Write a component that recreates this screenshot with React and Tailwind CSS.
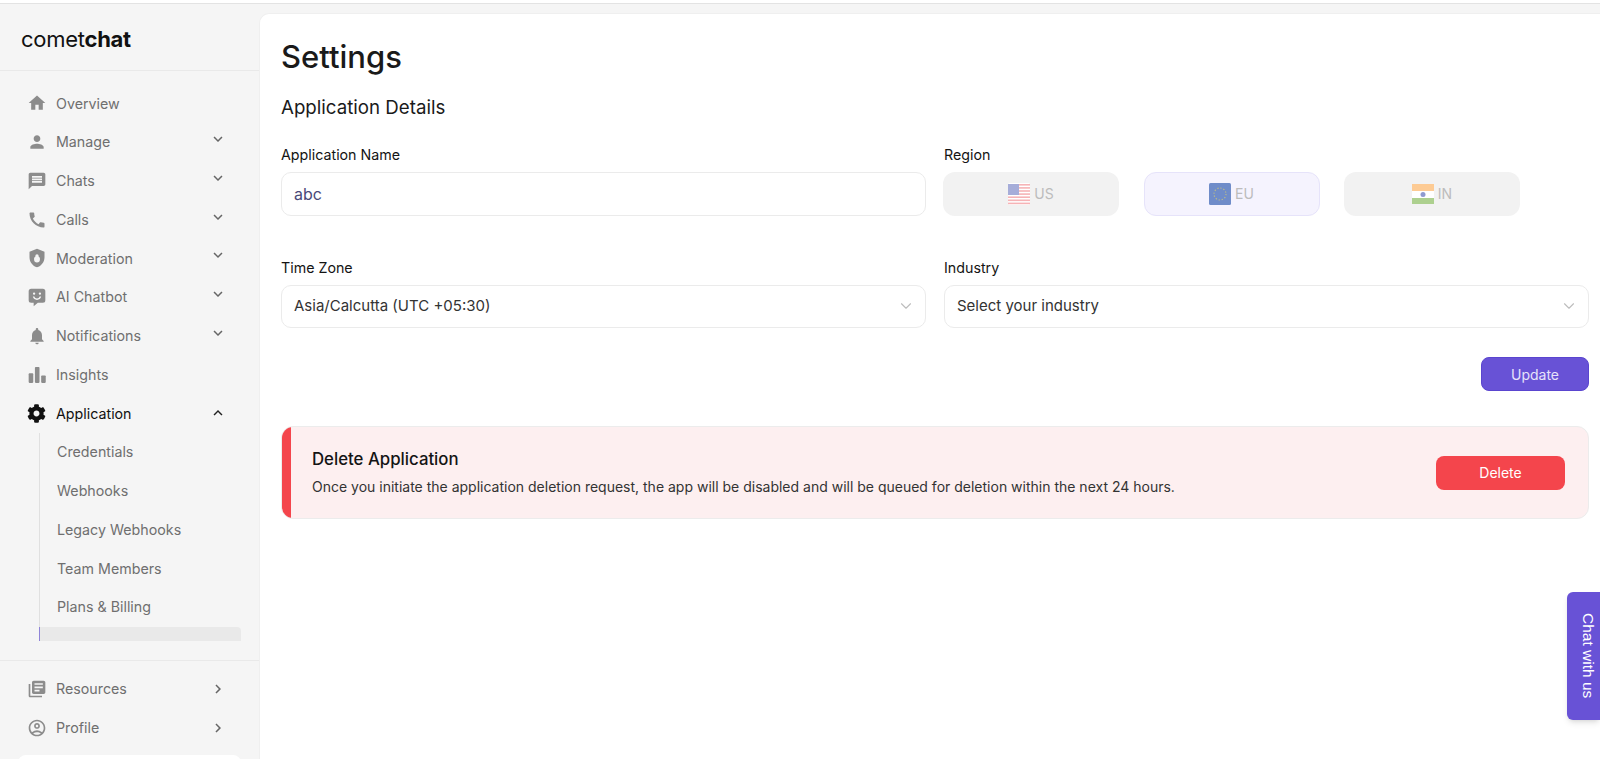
import { FaCog } from "react-icons/fa";
import {
	MdHome,
	MdPerson,
	MdMessage,
	MdCall,
	MdNotifications,
	MdLibraryBooks,
	MdOutlineAccountCircle,
	MdKeyboardArrowDown,
	MdKeyboardArrowUp,
	MdKeyboardArrowRight,
} from "react-icons/md";
import { ChevronDown } from "lucide-react";

const ShieldIcon = ({ className }) => (
	<svg viewBox="0 0 24 24" className={className} fill="currentColor">
		<path
			fillRule="evenodd"
			d="M12 1 3 4.500v6.500c0 5.600 3.800 10.700 9 12 5.200-1.300 9-6.400 9-12V4.500L12 1ZM12 7.500a2 2 0 0 1 2 2v1c.9.500 1.500 1.300 1.500 2.300v1a3.500 3.500 0 0 1-7 0v-1c0-1 .6-1.800 1.500-2.300v-1a2 2 0 0 1 2-2Z"
		/>
	</svg>
);

const BotIcon = ({ className }) => (
	<svg viewBox="0 0 24 24" className={className} fill="currentColor">
		<path
			fillRule="evenodd"
			d="M5 2h14A3 3 0 0 1 22 5v11a3 3 0 0 1-3 3h-6l-5 4v-4H5a3 3 0 0 1-3-3V5a3 3 0 0 1 3-3ZM8.500 6.500a1.400 1.400 0 1 0 0 2.800 1.400 1.400 0 0 0 0-2.800Zm7 0a1.400 1.400 0 1 0 0 2.800 1.400 1.400 0 0 0 0-2.800ZM7 11.500c.6 2.500 2.500 4 5 4s4.400-1.500 5-4h-1.800c-.5 1.500-1.700 2.300-3.200 2.300s-2.700-.8-3.200-2.300H7Z"
		/>
	</svg>
);

const BarsIcon = ({ className }) => (
	<svg viewBox="0 0 24 24" className={className} fill="currentColor">
		<rect x="2" y="10" width="5.500" height="11.500" rx="1" />
		<rect x="9.500" y="2.500" width="5.500" height="19" rx="1" />
		<rect x="17" y="12.500" width="5.500" height="9" rx="1" />
	</svg>
);

const UsFlag = () => (
	<svg viewBox="0 0 22 22" className="w-[22px] h-[22px]">
		<rect width="22" height="22" rx="1.500" fill="#fff" />
		{[0, 1, 2, 3, 4, 5, 6].map((i) => (
			<rect key={i} y={1 + i * 3.1} width="22" height="1.600" fill="#f6b3b6" />
		))}
		<rect y="1" width="11" height="11" fill="#a6add9" />
	</svg>
);

const EuFlag = () => (
	<svg viewBox="0 0 22 22" className="w-[22px] h-[22px]">
		<rect width="22" height="22" rx="1.500" fill="#6f8cc9" />
		<circle cx="11" cy="11" r="6" fill="none" stroke="#b7b98a" strokeWidth="1.200" strokeDasharray="1.300 1.800" />
	</svg>
);

const InFlag = () => (
	<svg viewBox="0 0 22 22" className="w-[22px] h-[22px]">
		<rect y="1" width="22" height="7" fill="#fdcb94" />
		<rect y="8" width="22" height="7" fill="#ffffff" />
		<rect y="15" width="22" height="6" fill="#add08f" />
		<circle cx="11" cy="11.500" r="2.500" fill="#8f9ad0" />
	</svg>
);

const navTop = [
	{ label: "Overview", icon: MdHome },
	{ label: "Manage", icon: MdPerson, arrow: "down" },
	{ label: "Chats", icon: MdMessage, arrow: "down" },
	{ label: "Calls", icon: MdCall, arrow: "down" },
	{ label: "Moderation", icon: ShieldIcon, arrow: "down" },
	{ label: "AI Chatbot", icon: BotIcon, arrow: "down" },
	{ label: "Notifications", icon: MdNotifications, arrow: "down" },
	{ label: "Insights", icon: BarsIcon },
];

const subNav = ["Credentials", "Webhooks", "Legacy Webhooks", "Team Members", "Plans & Billing"];

const navBottom = [
	{ label: "Resources", icon: MdLibraryBooks },
	{ label: "Profile", icon: MdOutlineAccountCircle },
];

function NavRow({ label, icon: Icon, arrow }) {
	return (
		<div className="flex items-center h-[38.750px] pl-[27px] pr-[32px] text-[#6f6f6f]">
			<span className="w-[29px] shrink-0">
				<Icon className="w-[20px] h-[20px] text-[#8c8c8c]" />
			</span>
			<span className="flex-1 text-[14.250px]">{label}</span>
			{arrow === "down" && <MdKeyboardArrowDown className="w-[18px] h-[18px] text-[#666] -mt-[6px]" />}
			{arrow === "right" && <MdKeyboardArrowRight className="w-[18px] h-[18px] text-[#666]" />}
		</div>
	);
}

function Field({ label, children }) {
	return (
		<div>
			<div className="text-[14.250px] leading-[17px] text-[#141414] mb-[9px]">{label}</div>
			{children}
		</div>
	);
}

function SelectBox({ value }) {
	return (
		<div className="flex items-center justify-between h-[43.500px] pl-[12px] pr-[10px] rounded-[10px] border border-[#ebebeb] text-[15px] text-[#333]">
			<span>{value}</span>
			<ChevronDown className="w-[18px] h-[18px] text-[#bdbdbd]" strokeWidth={1.500} />
		</div>
	);
}

function RegionButton({ name, flag, active }) {
	return (
		<div
			className={
				active
					? "flex items-center justify-center gap-[4px] w-[176px] h-[43.500px] rounded-[12px] border border-[#e6e3fa] bg-[#f5f3fe] text-[14px] text-[#bcbcbc]"
					: "flex items-center justify-center gap-[4px] w-[176px] h-[43.500px] rounded-[12px] bg-[#f2f2f2] text-[14px] text-[#bcbcbc]"
			}
		>
			{flag}
			<span>{name}</span>
		</div>
	);
}

export default function App() {
	return (
		<div className="relative h-[759px] overflow-hidden flex flex-col bg-[#f5f5f5] font-['Inter','Liberation_Sans',sans-serif]">
			<div className="h-[4px] shrink-0 bg-white border-b border-[#e3e3e3]" />

			<div className="flex flex-1 min-h-0">
				{/* sidebar */}
				<aside className="w-[259px] shrink-0 flex flex-col">
					<div className="h-[67px] shrink-0 border-b border-[#e9e9e9] pl-[21px] pt-[19px] text-[22px] leading-[32px] text-[#111] tracking-[-0.3px]">
						comet<span className="font-bold">chat</span>
					</div>

					<nav className="pt-[13px]">
						{navTop.map((item) => (
							<NavRow key={item.label} {...item} />
						))}

						<div className="flex items-center h-[38.750px] pl-[27px] pr-[32px] text-[#111]">
							<span className="w-[29px] shrink-0">
								<FaCog className="w-[19px] h-[19px]" />
							</span>
							<span className="flex-1 text-[14.250px]">Application</span>
							<MdKeyboardArrowUp className="w-[18px] h-[18px] text-[#222]" />
						</div>

						<div className="ml-[39px] mr-[18px] border-l border-[#e0e0e0]">
							{subNav.map((label) => (
								<div key={label} className="flex items-center h-[38.750px] pl-[17px] text-[14.250px] text-[#6f6f6f]">
									{label}
								</div>
							))}
							<div className="h-[14px] bg-[#e9e9e9] rounded-tr-[4px] border-l border-[#8f84d8] -ml-px" />
						</div>
					</nav>

					<div className="mt-[19px] border-t border-[#e9e9e9] pt-[9px]">
						{navBottom.map((item) => (
							<NavRow key={item.label} {...item} arrow="right" />
						))}
					</div>

					<div className="mt-[8px] mx-[18px] h-[20px] bg-white rounded-t-[8px] shrink-0" />
				</aside>

				{/* main panel */}
				<main className="flex-1 min-w-0 mt-[9px] bg-white rounded-tl-[10px] border-l border-t border-[#efefef] pl-[21px] pr-[11px] pt-[24px]">
					<h1 className="text-[31px] leading-[38px] font-medium text-[#1a1a1a]">Settings</h1>
					<h2 className="mt-[20px] text-[18.700px] leading-[24px] text-[#1a1a1a]">Application Details</h2>

					<div className="mt-[26px] grid grid-cols-2 gap-x-[18px] gap-y-[43px]">
						<Field label="Application Name">
							<div className="flex items-center h-[43.500px] pl-[12px] rounded-[10px] border border-[#ebebeb] text-[16px] text-[#4a4a78]">
								abc
							</div>
						</Field>
						<Field label="Region">
							<div className="flex gap-[24.500px] -ml-px">
								<RegionButton name="US" flag={<UsFlag />} />
								<RegionButton name="EU" flag={<EuFlag />} active />
								<RegionButton name="IN" flag={<InFlag />} />
							</div>
						</Field>
						<Field label="Time Zone">
							<SelectBox value="Asia/Calcutta (UTC +05:30)" />
						</Field>
						<Field label="Industry">
							<SelectBox value="Select your industry" />
						</Field>
					</div>

					<div className="flex justify-end mt-[29px]">
						<button className="w-[108px] h-[34px] rounded-[8px] bg-[#6852d6] border border-[#5a45cf] text-[14px] text-[#e6e2fa]">
							Update
						</button>
					</div>

					<div className="mt-[35px] flex items-center h-[93px] rounded-[12px] border border-[#ececec] bg-[#fdeff0] overflow-hidden">
						<div className="w-[9px] h-full shrink-0 bg-[#f4454c]" />
						<div className="flex-1 pl-[21px]">
							<div className="text-[16.800px] leading-[20px] font-medium text-[#141414]">Delete Application</div>
							<p className="mt-[9px] text-[14px] leading-[18px] text-[#333]">
								Once you initiate the application deletion request, the app will be disabled and will be queued for deletion within the next 24 hours.
							</p>
						</div>
						<button className="w-[129px] h-[34px] mr-[23px] rounded-[8px] bg-[#f4454c] text-[14px] text-white">
							Delete
						</button>
					</div>
				</main>
			</div>

			{/* chat tab */}
			<div className="absolute right-0 top-[592px] w-[33px] h-[128px] flex items-center justify-center pl-[9px] rounded-l-[6px] bg-[#6852d6] shadow-md">
				<span className="[writing-mode:vertical-rl] text-[15.500px] leading-[18px] text-white font-['Liberation_Sans',sans-serif]">Chat with us</span>
			</div>
		</div>
	);
}
